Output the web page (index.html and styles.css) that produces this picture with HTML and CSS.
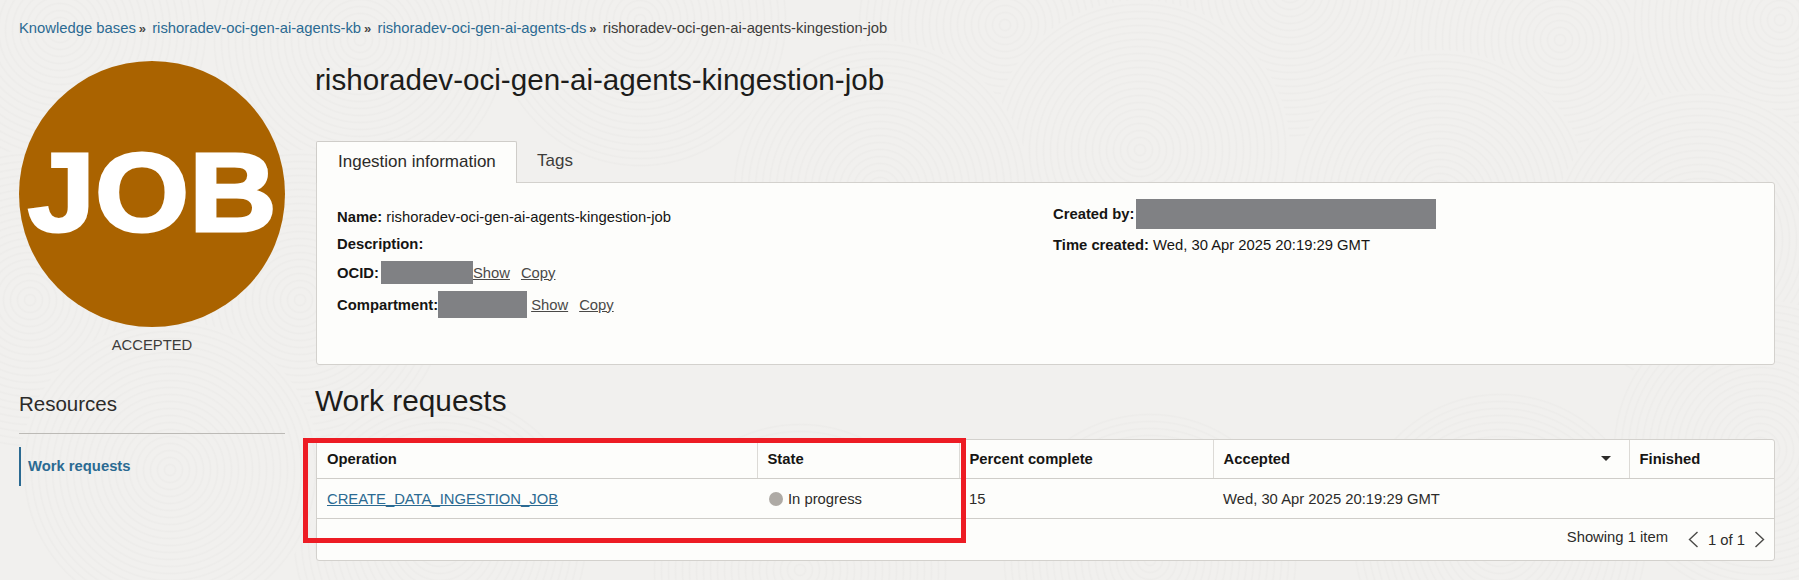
FILE: index.html
```html
<!DOCTYPE html>
<html lang="en">
<head>
<meta charset="utf-8">
<title>rishoradev-oci-gen-ai-agents-kingestion-job</title>
<link rel="stylesheet" href="styles.css">
</head>
<body>
<svg class="texture" width="1799" height="580" aria-hidden="true">
  <defs>
    <radialGradient id="rings" gradientUnits="userSpaceOnUse" cx="0" cy="0" r="7" spreadMethod="repeat">
      <stop offset="0" stop-color="#f1f0ee"/>
      <stop offset=".55" stop-color="#f1f0ee"/>
      <stop offset=".8" stop-color="#edecea"/>
      <stop offset="1" stop-color="#f1f0ee"/>
    </radialGradient>
    <circle id="swirl" r="150" fill="url(#rings)"/>
  </defs>
  <use href="#swirl" transform="translate(60 30)"/>
  <use href="#swirl" transform="translate(360 40)"/>
  <use href="#swirl" transform="translate(640 20)"/>
  <use href="#swirl" transform="translate(1005 25)"/>
  <use href="#swirl" transform="translate(1290 -10)"/>
  <use href="#swirl" transform="translate(1560 40)"/>
  <use href="#swirl" transform="translate(1780 20)"/>
  <use href="#swirl" transform="translate(1140 150)"/>
  <use href="#swirl" transform="translate(880 190)"/>
  <use href="#swirl" transform="translate(1440 200)"/>
  <use href="#swirl" transform="translate(1700 240)"/>
  <use href="#swirl" transform="translate(30 300)"/>
  <use href="#swirl" transform="translate(300 300)"/>
  <use href="#swirl" transform="translate(1760 450)"/>
  <use href="#swirl" transform="translate(1500 540)"/>
  <use href="#swirl" transform="translate(1150 560)"/>
  <use href="#swirl" transform="translate(800 570)"/>
  <use href="#swirl" transform="translate(440 540)"/>
  <use href="#swirl" transform="translate(170 470)"/>
</svg>
<div class="page">
  <nav class="crumbs">
    <a href="#">Knowledge bases</a><span class="sep">»</span>
    <a href="#">rishoradev-oci-gen-ai-agents-kb</a><span class="sep">»</span>
    <a href="#">rishoradev-oci-gen-ai-agents-ds</a><span class="sep">»</span>
    <span>rishoradev-oci-gen-ai-agents-kingestion-job</span>
  </nav>
  <div class="layout">
    <aside class="side">
      <div class="badge"><span class="badge-text">JOB</span></div>
      <div class="status">ACCEPTED</div>
      <h3 class="res-title">Resources</h3>
      <ul class="res-menu"><li><a href="#">Work requests</a></li></ul>
    </aside>
    <main class="main">
      <h1 class="title">rishoradev-oci-gen-ai-agents-kingestion-job</h1>
      <div class="tabs">
        <div class="tab tab-active">Ingestion information</div>
        <div class="tab">Tags</div>
      </div>
      <section class="panel">
        <div class="col col-left">
          <div class="line line-name"><b>Name:</b> rishoradev-oci-gen-ai-agents-kingestion-job</div>
          <div class="line line-desc"><b>Description:</b></div>
          <div class="line line-ocid"><b>OCID:</b><span class="mask mask-ocid"></span><a class="act" href="#">Show</a><a class="act" href="#">Copy</a></div>
          <div class="line line-comp"><b>Compartment:</b><span class="mask mask-comp"></span><a class="act" href="#">Show</a><a class="act" href="#">Copy</a></div>
        </div>
        <div class="col col-right">
          <div class="line line-created"><b>Created by:</b><span class="mask mask-user"></span></div>
          <div class="line line-time"><b>Time created:</b> Wed, 30 Apr 2025 20:19:29 GMT</div>
        </div>
      </section>
      <h2 class="sub">Work requests</h2>
      <section class="tablecard">
        <table class="grid">
          <colgroup>
            <col class="c-op"><col class="c-state"><col class="c-pct"><col class="c-acc"><col class="c-fin">
          </colgroup>
          <thead>
            <tr>
              <th>Operation</th>
              <th>State</th>
              <th>Percent complete</th>
              <th><span class="th-sort">Accepted<svg class="sort" width="10" height="5" viewBox="0 0 10 5"><path d="M0 0h10L5 5z"/></svg></span></th>
              <th>Finished</th>
            </tr>
          </thead>
          <tbody>
            <tr>
              <td><a href="#">CREATE_DATA_INGESTION_JOB</a></td>
              <td><span class="dot"></span>In progress</td>
              <td>15</td>
              <td>Wed, 30 Apr 2025 20:19:29 GMT</td>
              <td></td>
            </tr>
          </tbody>
        </table>
        <div class="foot">
          <span class="count">Showing 1 item</span>
          <svg class="chev" width="11" height="17" viewBox="0 0 11 17"><path d="M9.5 1 1.5 8.5l8 7.5"/></svg>
          <span class="pages">1 of 1</span>
          <svg class="chev" width="11" height="17" viewBox="0 0 11 17"><path d="M1.5 1l8 7.5-8 7.5"/></svg>
        </div>
      </section>
    </main>
  </div>
</div>
<div class="highlight"></div>
</body>
</html>
```
FILE: styles.css
```css
* { box-sizing: border-box; }
html, body { margin: 0; height: 100%; }
body {
  position: relative;
  height: 580px;
  overflow: hidden;
  font-family: "Liberation Sans", Arial, sans-serif;
  font-size: 14.8px;
  color: #161513;
  background-color: #f1f0ee;
}
a { color: #2b6a92; }
.texture { position: absolute; left: 0; top: 0; }
.page { position: relative; padding: 19px 24px 0 19px; }
.crumbs { height: 18px; line-height: 18px; white-space: nowrap; color: #3d3c3a; }
.crumbs a { text-decoration: none; }
.sep { font-size: 13px; font-weight: 700; margin: 0 2px 0 3px; color: #4a4947; }
.layout { display: flex; margin-top: 24px; gap: 31px; }
.side { width: 266px; flex: none; }
.badge {
  width: 266px; height: 266px; border-radius: 50%;
  background: #aa6300; color: #fff;
  font-weight: 700; font-size: 112px; line-height: 264px;
  text-align: center;
}
.badge-text {
  display: inline-block;
  -webkit-text-stroke: 3px #fff;
  transform: scaleX(1.08);
}
.status { margin-top: 9px; line-height: 18px; text-align: center; color: #3d3c3a; }
.res-title { margin: 38px 0 0; font-size: 20.5px; font-weight: 400; line-height: 24px; color: #2c2b29; }
.res-menu {
  list-style: none; margin: 17px 0 0; padding: 13px 0 0;
  border-top: 1px solid #bcbab6;
}
.res-menu li { border-left: 2px solid #2b6a92; height: 39px; padding-left: 7px; line-height: 39px; }
.res-menu a { font-weight: 700; text-decoration: none; }
.main { flex: 1; min-width: 0; }
.title { margin: 2px 0 0 -1px; font-size: 29.6px; font-weight: 400; line-height: 34px; color: #1d1c1a; }
.tabs { display: flex; margin-top: 44px; height: 42px; position: relative; z-index: 1; }
.tab { padding: 0 20px; line-height: 40px; font-size: 17px; color: #3d3c3a; }
.tab-active {
  background: #fdfdfb; border: 1px solid #cfcdc9; border-bottom: 0;
  border-radius: 2px 2px 0 0; padding: 0 21px; color: #2c2b29; width: 201px; white-space: nowrap;
}
.panel {
  display: flex; height: 183px; margin-top: -1px;
  background: #fdfdfb; border: 1px solid #d3d1cd; border-radius: 0 3px 3px 3px;
  padding: 24px 20px 0;
}
.col-left { width: 716px; flex: none; }
.line { display: flex; align-items: center; white-space: pre; }
.line b { font-weight: 700; }
.mask { display: block; background: #808184; }
.line-name { height: 20px; }
.line-desc { height: 20px; margin-top: 7px; }
.line-ocid { height: 23px; margin-top: 7px; }
.line-comp { height: 27px; margin-top: 7px; }
.mask-ocid { width: 92px; height: 23px; margin-left: 2px; }
.mask-comp { width: 89px; height: 27px; margin-right: 4px; }
.mask-user { width: 300px; height: 30px; margin-left: 2px; }
.line-created { height: 30px; margin-top: -8px; }
.line-time { height: 20px; margin-top: 6px; }
.act { color: #4a4947; text-decoration: underline; margin-right: 11px; }
.sub { margin: 19px 0 0 -1px; font-size: 29.8px; font-weight: 400; line-height: 34px; color: #1d1c1a; }
.tablecard {
  margin-top: 21px; height: 122px;
  background: #fdfdfb; border: 1px solid #d3d1cd; border-radius: 3px;
}
.grid { width: 100%; table-layout: fixed; border-collapse: collapse; }
.c-op { width: 440px; }
.c-state { width: 202px; }
.c-pct { width: 254px; }
.c-acc { width: 416px; }
.grid th, .grid td { text-align: left; padding: 0 10px; }
.grid th { height: 38px; font-weight: 700; border-bottom: 1px solid #cfcdc9; border-left: 1px solid #dcdad6; }
.grid th:first-child { border-left: 0; }
.grid td { height: 40px; padding-top: 1px; border-bottom: 1px solid #cfcdc9; color: #2c2b29; }
.th-sort { display: flex; justify-content: space-between; align-items: center; padding-right: 8px; }
.sort { fill: #2c2b29; }
.dot { display: inline-block; width: 14px; height: 14px; border-radius: 50%; background: #aeaaa5; margin: 0 5px 0 2px; vertical-align: -2px; }
.foot { display: flex; align-items: center; justify-content: flex-end; height: 42px; padding-right: 9px; color: #2c2b29; }
.count { margin: 0 20px 6px 0; }
.pages { margin: 0 9px; }
.chev { fill: none; stroke: #4a4947; stroke-width: 1.4; }
.highlight {
  position: absolute; left: 303px; top: 438px; width: 663px; height: 105px;
  border: 5px solid #ed1c24;
}
```
